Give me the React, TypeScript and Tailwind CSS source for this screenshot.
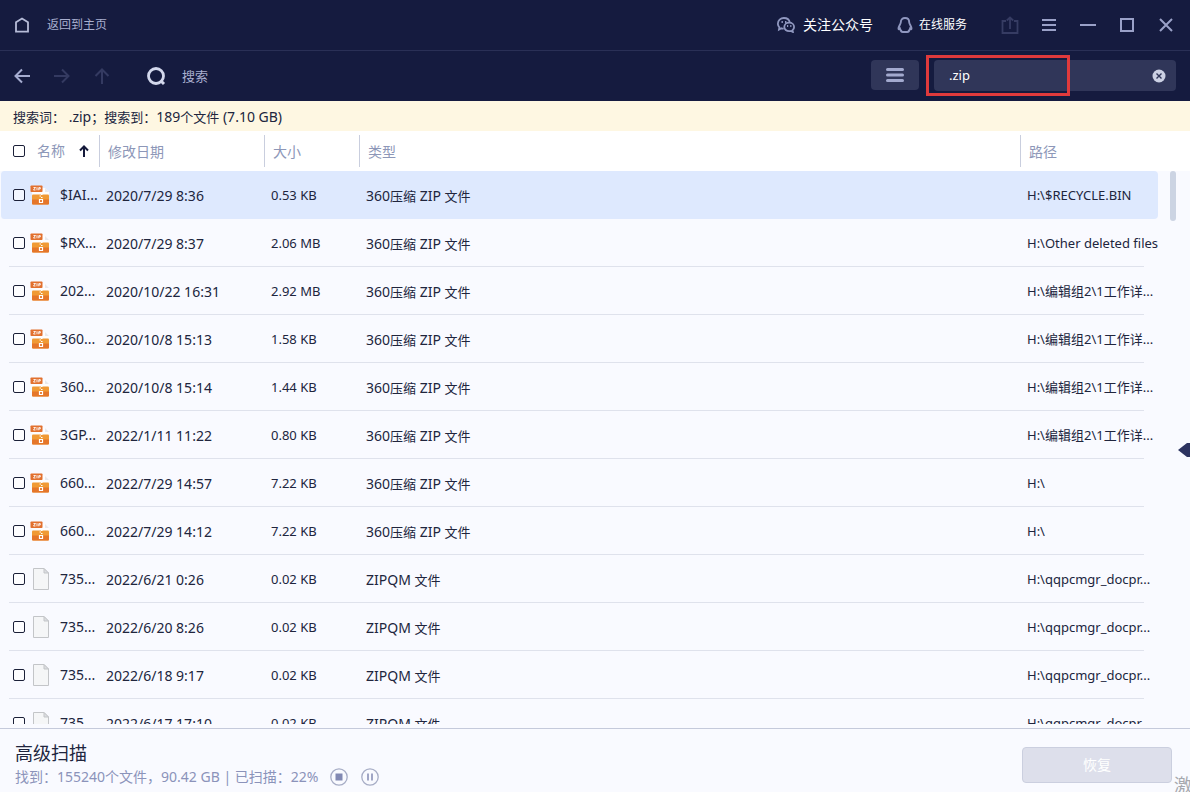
import { Fragment, useState } from "react";

interface FileRow {
  name: string;
  date: string;
  size: string;
  type: string;
  path: string;
  zip: boolean;
}

const ZIP_TYPE = "360压缩 ZIP 文件";
const QM_TYPE = "ZIPQM 文件";

const files: FileRow[] = [
  { name: "$IAI...", date: "2020/7/29 8:36", size: "0.53 KB", type: ZIP_TYPE, path: "H:\\$RECYCLE.BIN", zip: true },
  { name: "$RX...", date: "2020/7/29 8:37", size: "2.06 MB", type: ZIP_TYPE, path: "H:\\Other deleted files", zip: true },
  { name: "202...", date: "2020/10/22 16:31", size: "2.92 MB", type: ZIP_TYPE, path: "H:\\编辑组2\\1工作详...", zip: true },
  { name: "360...", date: "2020/10/8 15:13", size: "1.58 KB", type: ZIP_TYPE, path: "H:\\编辑组2\\1工作详...", zip: true },
  { name: "360...", date: "2020/10/8 15:14", size: "1.44 KB", type: ZIP_TYPE, path: "H:\\编辑组2\\1工作详...", zip: true },
  { name: "3GP...", date: "2022/1/11 11:22", size: "0.80 KB", type: ZIP_TYPE, path: "H:\\编辑组2\\1工作详...", zip: true },
  { name: "660...", date: "2022/7/29 14:57", size: "7.22 KB", type: ZIP_TYPE, path: "H:\\", zip: true },
  { name: "660...", date: "2022/7/29 14:12", size: "7.22 KB", type: ZIP_TYPE, path: "H:\\", zip: true },
  { name: "735...", date: "2022/6/21 0:26", size: "0.02 KB", type: QM_TYPE, path: "H:\\qqpcmgr_docpr...", zip: false },
  { name: "735...", date: "2022/6/20 8:26", size: "0.02 KB", type: QM_TYPE, path: "H:\\qqpcmgr_docpr...", zip: false },
  { name: "735...", date: "2022/6/18 9:17", size: "0.02 KB", type: QM_TYPE, path: "H:\\qqpcmgr_docpr...", zip: false },
  { name: "735...", date: "2022/6/17 17:10", size: "0.02 KB", type: QM_TYPE, path: "H:\\qqpcmgr_docpr...", zip: false },
];

// Chinese runs are set one size smaller than the latin text around them
const Mixed = ({ text }: { text: string }) => (
  <>
    {text.split(/([\u3000-\u9fff\uff00-\uffef]+)/).map((part, i) =>
      i % 2 ? (
        <span key={i} className="text-[13px]">{part}</span>
      ) : (
        <Fragment key={i}>{part}</Fragment>
      )
    )}
  </>
);

const ZipIcon = () => (
  <svg width="20" height="20" viewBox="0 0 20 20" className="shrink-0">
    <path d="M2 3h13l4 4v6H2z" fill="#fdfdfe" />
    <path d="M15 3v4h4z" fill="#e8e9ee" />
    <rect x="0.5" y="0.5" width="12" height="6.5" rx="0.8" fill="#e2702e" />
    <path d="M3.500 2.500h2L3.500 5h2M7 2.200v3.100M8.800 5.300V2.600h1.500v1.300H8.800" fill="none" stroke="#fff" strokeWidth="0.9" />
    <rect x="2" y="9.500" width="17" height="10" rx="1" fill="#f09a35" />
    <path d="M2 14.500h17v4a1 1 0 0 1-1 1H3a1 1 0 0 1-1-1z" fill="#e5762a" />
    <path d="M11 9.500h1.500M9.500 11H11M11 12.500h1.500" stroke="#fff" />
    <path d="M9.500 14.500h3v3h-3z" fill="none" stroke="#fff" strokeWidth="1.2" />
  </svg>
);

const FileIcon = () => (
  <svg width="20" height="22" viewBox="0 0 20 22" className="shrink-0">
    <path d="M3.500 0.500H14L18.500 5v16.500h-15z" fill="#f5f6f7" stroke="#c3c5c8" />
    <path d="M14 0.500V5h4.500z" fill="#dcdee1" stroke="#c3c5c8" />
  </svg>
);

const Checkbox = ({ label }: { label: string }) => (
  <input
    type="checkbox"
    aria-label={label}
    className="size-3 shrink-0 appearance-none rounded-[2px] border border-[#1b2038] bg-white/60 checked:bg-[#1b2038]"
  />
);

const Bars = () => (
  <svg width="18" height="14" viewBox="0 0 18 14">
    <path d="M1.500 1.500h15M1.500 7h15M1.500 12.500h15" stroke="#a3aacf" strokeWidth="3" strokeLinecap="round" />
  </svg>
);

const TitleBar = () => (
  <header className="flex h-[51px] shrink-0 items-center border-b border-[#2a3056] pr-[15px] pl-[14px] text-[#8f97bf]">
    <a href="#home" className="flex items-center gap-[17px] text-xs leading-none text-[#a9afcf]">
      <svg width="16" height="16" viewBox="0 0 16 16" fill="none" stroke="#b6bcd8" strokeWidth="1.8">
        <path d="M2 14.700V5.200L8 1.500l6 3.700v9.500z" />
      </svg>
      返回到主页
    </a>
    <a href="#follow" className="ml-auto flex items-center gap-2 text-sm text-white">
      <svg width="18" height="16" viewBox="0 0 18 16" fill="none" stroke="#8f97bf" strokeWidth="1.8">
        <path d="M6.700 11.700a7 7 0 0 1-2.200-.4L2 12.600l.4-2.200A5 5 0 0 1 .9 6.500C.9 3.500 3.500 1 6.900 1c3 0 5.400 1.900 5.900 4.500" />
        <path d="M12.200 5.600c2.700 0 4.900 1.900 4.900 4.300 0 1.300-.6 2.400-1.500 3.200l.3 1.900-2-1c-.5.200-1.100.2-1.700.2-2.700 0-4.900-1.900-4.900-4.300s2.200-4.300 4.900-4.300z" />
        <path d="M4.500 5h1.400M8 5h1.400M10 9h1.200M13.200 9h1.200" />
      </svg>
      关注公众号
    </a>
    <a href="#service" className="ml-6 flex items-center gap-[6px] text-xs text-white">
      <svg width="16" height="16" viewBox="0 0 16 16" fill="none" stroke="#8f97bf" strokeWidth="1.9">
        <path d="M8 1C5.500 1 3.800 2.800 3.800 5.200c0 1.800-2.300 4-2.300 6.300 0 .9.600 1 1.400.1.300 1 .7 1.600 1.300 2.100-.7 1.300.8 1.300 3.800 1.300s4.500 0 3.800-1.300c.6-.5 1-1.100 1.300-2.100.8.900 1.400.8 1.400-.1 0-2.300-2.300-4.500-2.300-6.300C12.200 2.800 10.500 1 8 1z" />
      </svg>
      在线服务
    </a>
    <div className="ml-[34px] flex items-center gap-[21px]">
      <button type="button" aria-label="导出">
        <svg width="18" height="18" viewBox="0 0 18 18" fill="none" stroke="#363c63" strokeWidth="1.8">
          <path d="M5 5H1.500v12h15V5H13M9 13V2M5.800 4.500L9 1.500l3.200 3" />
        </svg>
      </button>
      <button type="button" aria-label="菜单">
        <svg width="18" height="18" viewBox="0 0 18 18" stroke="#9aa1c8" strokeWidth="2">
          <path d="M2 4h14M2 9h14M2 14h14" />
        </svg>
      </button>
      <button type="button" aria-label="最小化">
        <svg width="18" height="18" viewBox="0 0 18 18" stroke="#9aa1c8" strokeWidth="2">
          <path d="M1 9h16" />
        </svg>
      </button>
      <button type="button" aria-label="最大化">
        <svg width="18" height="18" viewBox="0 0 18 18" fill="none" stroke="#9aa1c8" strokeWidth="2">
          <path d="M3 3h12v12H3z" />
        </svg>
      </button>
      <button type="button" aria-label="关闭">
        <svg width="18" height="18" viewBox="0 0 18 18" stroke="#9aa1c8" strokeWidth="2">
          <path d="M3 3l12 12M15 3L3 15" />
        </svg>
      </button>
    </div>
  </header>
);

const Toolbar = () => {
  const [query, setQuery] = useState(".zip");

  return (
    <div className="flex h-[50px] shrink-0 items-start px-[14px] pt-[9px]">
      <div className="flex h-8 items-center gap-6">
        <button type="button" aria-label="后退">
          <svg width="16" height="16" viewBox="0 0 16 16" fill="none" stroke="#a5acd0" strokeWidth="2">
            <path d="M16 8H1.500M8 1.500L1.500 8 8 14.500" />
          </svg>
        </button>
        <button type="button" aria-label="前进">
          <svg width="16" height="16" viewBox="0 0 16 16" fill="none" stroke="#343a61" strokeWidth="2">
            <path d="M0 8h14.500M8 1.500L14.500 8 8 14.500" />
          </svg>
        </button>
        <button type="button" aria-label="向上">
          <svg width="16" height="16" viewBox="0 0 16 16" fill="none" stroke="#343a61" strokeWidth="2">
            <path d="M8 16V1.500M1.500 8L8 1.500 14.500 8" />
          </svg>
        </button>
      </div>
      <div className="ml-9 flex h-[34px] items-center gap-4 text-[13px] text-[#a9afcf]">
        <svg width="20" height="20" viewBox="0 0 20 20" fill="none" stroke="#d3d8ec" strokeWidth="2.800">
          <circle cx="10" cy="9" r="7.500" />
          <path d="M14.500 13.500l3.500 3.500" strokeWidth="3" />
        </svg>
        搜索
      </div>
      <button
        type="button"
        aria-label="列表视图"
        className="ml-auto flex h-[30px] w-12 items-center justify-center rounded bg-[#303659]"
      >
        <Bars />
      </button>
      <div className="relative ml-[15px] flex h-[31px] w-[242px] items-center rounded bg-[#303659] pr-2 pl-[15px]">
        <input
          type="text"
          aria-label="搜索"
          value={query}
          onChange={(e) => setQuery(e.target.value)}
          className="min-w-0 flex-1 bg-transparent text-[13px] text-white outline-none"
        />
        <button type="button" aria-label="清除" onClick={() => setQuery("")}>
          <svg width="18" height="18" viewBox="0 0 18 18">
            <circle cx="9" cy="9" r="6.500" fill="#ccd1e4" />
            <path d="M6.500 6.500l5 5M11.500 6.500l-5 5" stroke="#303659" strokeWidth="1.400" />
          </svg>
        </button>
        <div className="pointer-events-none absolute -top-[5px] -left-2 h-[41px] w-36 border-3 border-[#e03a3c]" />
      </div>
    </div>
  );
};

const FileTable = () => (
  <table className="w-full table-fixed border-separate border-spacing-0 text-left text-sm whitespace-nowrap">
    <colgroup>
      <col className="w-[99px]" />
      <col className="w-[165px]" />
      <col className="w-[95px]" />
      <col />
      <col className="w-[138px]" />
    </colgroup>
    <thead className="bg-white text-[#8d97b8]">
      <tr className="h-10">
        <th className="p-0 font-normal">
          <div className="flex items-center pl-[13px]">
            <Checkbox label="全选" />
            <span className="ml-3">名称</span>
            <svg width="10" height="12" viewBox="0 0 10 12" fill="none" stroke="#14193a" strokeWidth="2" className="ml-[14px]">
              <path d="M5 12V1.500M1 5.500l4-4 4 4" />
            </svg>
          </div>
        </th>
        {["修改日期", "大小", "类型", "路径"].map((title) => (
          <th key={title} className="p-0 font-normal">
            <div className="flex h-8 items-center border-l border-[#c9cede] pt-px pl-2">{title}</div>
          </th>
        ))}
      </tr>
    </thead>
    <tbody className="text-[#20253d]">
      {files.map((file, i) => (
        <tr
          key={i}
          className={
            i === 0
              ? "h-12 *:bg-[#dee9fe]"
              : "h-12 *:relative *:after:absolute *:after:inset-x-0 *:after:bottom-0 *:after:h-px *:after:bg-[#dfe2ec]"
          }
        >
          <td className="rounded-l border-l border-[#f9faff] p-0 after:left-2!">
            <div className="flex items-center pl-3">
              <Checkbox label={file.name} />
              <span className="ml-[5px]">{file.zip ? <ZipIcon /> : <FileIcon />}</span>
              <span className="ml-[10px]">{file.name}</span>
            </div>
          </td>
          <td className="p-0 pt-px pl-[7px]">{file.date}</td>
          <td className="p-0 pt-px pl-[7px] text-[13px]">{file.size}</td>
          <td className="p-0 pt-px pl-[7px]">
            <Mixed text={file.type} />
          </td>
          <td className="rounded-r p-0 pt-px pl-[7px] text-[13px] after:right-[14px]!">{file.path}</td>
        </tr>
      ))}
    </tbody>
  </table>
);

const Footer = () => (
  <footer className="relative flex shrink-0 items-center justify-between overflow-hidden border-t border-[#c5cadb] pt-3 pr-[18px] pb-[3px] pl-[15px]">
    <div>
      <h2 className="text-lg leading-6 text-[#20253d]">高级扫描</h2>
      <div className="flex h-6 items-center text-sm text-[#8b93ba]">
        <span>找到：155240个文件，90.42 GB | 已扫描：22%</span>
        <button type="button" aria-label="停止" className="ml-3">
          <svg width="18" height="18" viewBox="0 0 18 18" className="block">
            <circle cx="9" cy="9" r="8.200" fill="none" stroke="#a7adc6" strokeWidth="1.300" />
            <rect x="5.500" y="5.500" width="7" height="7" fill="#8289b3" />
          </svg>
        </button>
        <button type="button" aria-label="暂停" className="ml-[13px]">
          <svg width="18" height="18" viewBox="0 0 18 18" className="block">
            <circle cx="9" cy="9" r="8.200" fill="none" stroke="#a7adc6" strokeWidth="1.300" />
            <path d="M7 5.500v7M11 5.500v7" stroke="#8289b3" strokeWidth="1.500" />
          </svg>
        </button>
      </div>
    </div>
    <button
      type="button"
      className="h-9 w-[150px] rounded border border-[#cbcfdf] bg-[#dddfeb] text-sm text-white"
    >
      恢复
    </button>
    <span className="absolute -right-[2px] -bottom-[3px] text-lg leading-5 text-[#a6a8ad]">激</span>
  </footer>
);

const App = () => {
  return (
    <div className="flex h-screen flex-col overflow-hidden bg-[#f9faff] font-['Noto_Sans','Noto_Sans_CJK_SC',sans-serif]">
      <div className="bg-[#151b3f]">
        <TitleBar />
        <Toolbar />
      </div>
      <div className="flex h-[30px] shrink-0 items-center bg-[#fef7e2] pt-px pl-[13px] text-sm text-[#20253d]">
        <p>
          <Mixed text="搜索词： .zip；搜索到：189个文件 (7.10 GB)" />
        </p>
      </div>
      <main className="relative mb-1 flex min-h-0 flex-1 overflow-hidden">
        <div className="min-w-0 flex-1">
          <FileTable />
        </div>
        <div className="w-8">
          <div className="h-10 bg-white" />
          <div className="ml-3 h-[50px] w-[6px] rounded-full bg-[#ccd4e3]" />
        </div>
        <svg width="12" height="14" viewBox="0 0 12 14" className="absolute top-[312px] right-0">
          <path d="M0 7L9 0h3v14H9z" fill="#2c3360" />
        </svg>
      </main>
      <Footer />
    </div>
  );
};

export default App;
